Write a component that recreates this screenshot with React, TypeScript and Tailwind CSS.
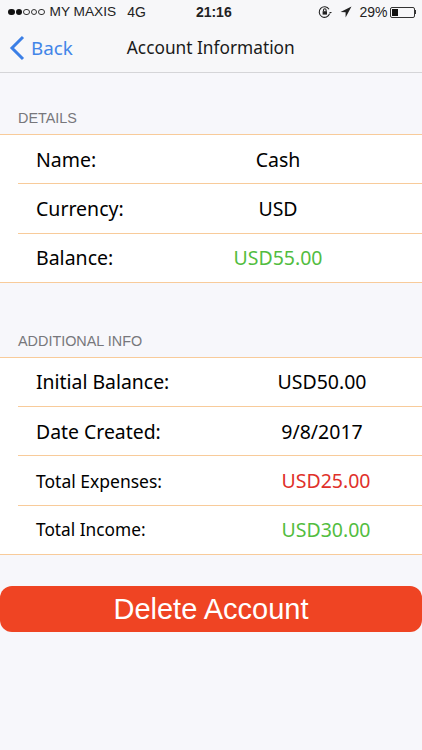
import React from "react";

const font = "font-['Noto_Sans',sans-serif]";

function Row({ label, value, labelCls = "w-[98px] text-[19.5px]", valueCls = "text-black", last = false }: { label: string; value: string; labelCls?: string; valueCls?: string; last?: boolean }) {
  return (
    <div className={last ? "" : "pl-[18px]"}>
      <div className={`flex h-[49.3px] items-center border-b border-[#f8cb9a] ${last ? "pl-[36px]" : "pl-[18px]"}`}>
        <div className={`flex-none whitespace-nowrap ${labelCls}`}>{label}</div>
        <div className={`flex-1 text-center text-[19.5px] ${valueCls}`}>{value}</div>
      </div>
    </div>
  );
}

function Header({ children }: { children: string }) {
  return <div className="pl-[18px] text-[14.4px] leading-[20px] text-[#77777c] font-['Liberation_Sans',sans-serif]">{children}</div>;
}

export default function App() {
  return (
    <div className={`h-[750px] w-[422px] overflow-hidden bg-[#f7f7fb] text-black ${font}`}>
      <div className="h-[73px] border-b border-[#d5d5d8] bg-[#f7f7f9]">
        <div className="flex h-[24px] items-center pl-[8px] pr-[6px] font-['Liberation_Sans',sans-serif] text-[14px] text-[#222]">
          <div className="flex items-center gap-[1px]">
            <span className="h-[6.5px] w-[6.5px] rounded-full bg-[#111]" />
            <span className="h-[6.5px] w-[6.5px] rounded-full bg-[#111]" />
            <span className="h-[6.5px] w-[6.5px] rounded-full border border-[#333]" />
            <span className="h-[6.5px] w-[6.5px] rounded-full border border-[#333]" />
            <span className="h-[6.5px] w-[6.5px] rounded-full border border-[#333]" />
          </div>
          <span className="ml-[5px] text-[13.7px]">MY MAXIS</span>
          <span className="ml-[11px]">4G</span>
          <span className="ml-[50px] font-bold">21:16</span>
          <div className="ml-auto flex items-center">
            <svg width="14" height="14" viewBox="0 0 14 14" fill="none" stroke="#222" strokeWidth="1.1">
              <path d="M11 4.2A5.3 5.3 0 1 0 11.6 8.6" />
              <path d="M11 7h3l-1.5 1.6z" fill="#222" stroke="none" />
              <rect x="4.6" y="6.2" width="4.4" height="3.4" fill="#222" stroke="none" />
              <path d="M5.5 6.2V5a1.3 1.3 0 0 1 2.6 0v1.2" />
            </svg>
            <svg className="ml-[8px]" width="12" height="12" viewBox="0 0 12 12">
              <path d="M11.5.5 5.6 11.5V6.2L.5 6z" fill="#222" />
            </svg>
            <span className="ml-[7px]">29%</span>
            <div className="ml-[2px] flex items-center">
              <div className="h-[11px] w-[25px] rounded-[2px] border border-[#333] p-[1px]">
                <div className="h-full w-[6px] bg-[#111]" />
              </div>
              <div className="h-[4px] w-[1.5px] bg-[#333]" />
            </div>
          </div>
        </div>
        <div className="flex h-[48px] items-center">
          <svg className="ml-[9px]" width="16" height="26" viewBox="0 0 16 26" fill="none" stroke="#3b7fe6" strokeWidth="3">
            <path d="M14 2 3 13l11 11" />
          </svg>
          <span className="ml-[6px] text-[18.8px] text-[#4285e8]">Back</span>
          <span className="ml-[54px] text-[17.3px] text-[#1a1a1a]">Account Information</span>
        </div>
      </div>

      <div className="mt-[35px]"><Header>DETAILS</Header></div>
      <div className="mt-[6px] border-t border-[#f8cb9a] bg-white">
        <Row label="Name:" value="Cash" />
        <Row label="Currency:" value="USD" />
        <Row label="Balance:" value="USD55.00" valueCls="text-[#52bd3f]" last />
      </div>

      <div className="mt-[48px]"><Header>ADDITIONAL INFO</Header></div>
      <div className="mt-[6px] border-t border-[#f8cb9a] bg-white">
        <Row label="Initial Balance:" value="USD50.00" labelCls="w-[186px] text-[19.4px]" />
        <Row label="Date Created:" value="9/8/2017" labelCls="w-[186px] text-[19.4px]" />
        <Row label="Total Expenses:" value="USD25.00" valueCls="text-[#e0302a]" labelCls="w-[194px] text-[17.5px]" />
        <Row label="Total Income:" value="USD30.00" valueCls="text-[#52bd3f]" labelCls="w-[194px] text-[17.3px]" last />
      </div>

      <button className="mt-[31px] block h-[46px] w-full rounded-[12px] bg-[#ef4423] text-center font-['Liberation_Sans',sans-serif] text-[29px] leading-[46px] text-white">
        Delete Account
      </button>
    </div>
  );
}
